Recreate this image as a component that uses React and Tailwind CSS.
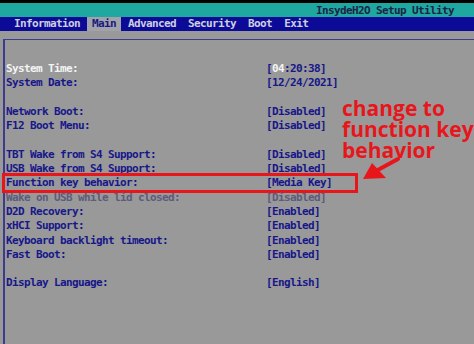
import React from "react";

const mono = { fontFamily: '"DejaVu Sans Mono", "Liberation Mono", monospace' };

const tabs = ["Information", "Main", "Advanced", "Security", "Boot", "Exit"];

const rows = [
  { label: "System Time:", value: "time", labelClass: "text-[#f4f4f4]" },
  { label: "System Date:", value: "[12/24/2021]" },
  null,
  { label: "Network Boot:", value: "[Disabled]" },
  { label: "F12 Boot Menu:", value: "[Disabled]" },
  null,
  { label: "TBT Wake from S4 Support:", value: "[Disabled]" },
  { label: "USB Wake from S4 Support:", value: "[Disabled]" },
  { label: "Function key behavior:", value: "[Media Key]", boxed: true },
  { label: "Wake on USB while lid closed:", value: "[Disabled]", dim: true },
  { label: "D2D Recovery:", value: "[Enabled]" },
  { label: "xHCI Support:", value: "[Enabled]" },
  { label: "Keyboard backlight timeout:", value: "[Enabled]" },
  { label: "Fast Boot:", value: "[Enabled]" },
  null,
  { label: "Display Language:", value: "[English]" },
];

function Row({ row }) {
  if (!row) return <div className="h-[14.3px]" />;
  const base = row.dim ? "text-[#5c5c7c]" : "text-[#17178a]";
  return (
    <div className="relative flex h-[14.3px] items-center leading-[14.3px] whitespace-nowrap">
      <div className={`w-[261px] pl-[1px] ${row.labelClass || base}`}>{row.label}</div>
      <div className={base}>
        {row.value === "time" ? (
          <>
            [<span className="text-[#f4f4f4]">04</span>:20:38]
          </>
        ) : (
          row.value
        )}
      </div>
      {row.boxed && (
        <div className="absolute left-[-3px] top-[-3px] w-[356px] h-[20px] border-[3px] border-[#e8161b]" />
      )}
    </div>
  );
}

export default function App() {
  return (
    <div
      className="relative w-[474px] h-[344px] overflow-hidden bg-[#999999] font-bold text-[11px] tracking-[-0.62px]"
      style={mono}
    >
      <div className="h-[3px] bg-black" />
      <div className="h-[14px] bg-[#1fa89f] flex items-center pl-[316px] pt-[3px] text-[#1c2448] whitespace-nowrap">
        InsydeH2O Setup Utility
      </div>
      <div className="h-[14px] bg-[#0b0b98] flex items-stretch pl-[9px] gap-[2px]">
        {tabs.map((t) => (
          <div
            key={t}
            className={`px-[5px] flex items-center ${
              t === "Main" ? "bg-[#a2a2aa] text-[#1a1a80]" : "text-[#cfcfe0]"
            }`}
          >
            {t}
          </div>
        ))}
      </div>
      <div className="h-[8px]" />
      <div className="ml-[3px] h-[400px] border-t border-l-2 border-[#3c3c8c] pt-[22px]">
        {rows.map((r, i) => (
          <Row key={i} row={r} />
        ))}
      </div>

      {/* annotation */}
      <div
        className="absolute left-[342px] top-[98px] flex flex-col gap-[1px] text-[21px] leading-[20px] tracking-normal font-bold text-[#e8161b] whitespace-nowrap"
        style={{ fontFamily: '"Open Sans", "Noto Sans", sans-serif' }}
      >
        <div>change to</div>
        <div>function key</div>
        <div>behavior</div>
      </div>
      <svg className="absolute left-0 top-0" width="474" height="344" viewBox="0 0 474 344">
        <line x1="398" y1="159" x2="376" y2="171" stroke="#e8161b" strokeWidth="4" strokeLinecap="round" />
        <polygon points="363,179 372,163 386,178" fill="#e8161b" />
      </svg>
    </div>
  );
}
